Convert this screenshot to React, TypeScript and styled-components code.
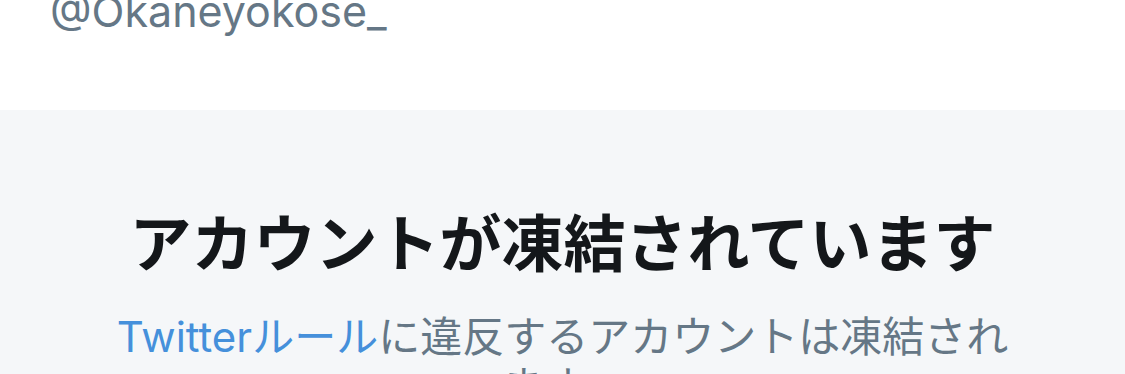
import { createGlobalStyle, styled } from "styled-components";

const GlobalStyle = createGlobalStyle`
  html, body {
    margin: 0;
    padding: 0;
    background: #ffffff;
  }
  body {
    font-family: Inter, "Noto Sans CJK JP", sans-serif;
    -webkit-font-smoothing: antialiased;
  }
`;

export default function App() {
  return (
    <>
      <GlobalStyle />
      <Page>
        <ProfileHeader>
          <ScreenName>@Okaneyokose_</ScreenName>
        </ProfileHeader>
        <SuspendedPanel>
          <Title>アカウントが凍結されています</Title>
          <Description>
            <RuleLink href="#">Twitterルール</RuleLink>
            に違反するアカウントは凍結されます。
          </Description>
        </SuspendedPanel>
      </Page>
    </>
  );
}

const Page = styled.div`
  display: flex;
  flex-direction: column;
  width: 1125px;
  height: 374px;
  overflow: hidden;
`;

const ProfileHeader = styled.div`
  display: flex;
  height: 110px;
  padding: 0 50px;
  background: #ffffff;
  flex-shrink: 0;
`;

const ScreenName = styled.div`
  margin-top: -15px;
  height: 52px;
  font-size: 43px;
  line-height: 52px;
  color: #657786;
`;

const SuspendedPanel = styled.div`
  display: flex;
  flex: 1;
  flex-direction: column;
  align-items: center;
  padding: 93px 100px 0;
  background: #f5f7f9;
  gap: 35px;
`;

const Title = styled.h1`
  margin: 0;
  font-family: "Noto Sans CJK JP", sans-serif;
  font-size: 62px;
  line-height: 74px;
  font-weight: 700;
  color: #14171a;
  text-align: center;
  white-space: nowrap;
`;

const Description = styled.p`
  margin: 0;
  font-size: 42px;
  line-height: 50px;
  color: #657786;
  text-align: center;
`;

const RuleLink = styled.a`
  color: #4590db;
  text-decoration: none;
`;
